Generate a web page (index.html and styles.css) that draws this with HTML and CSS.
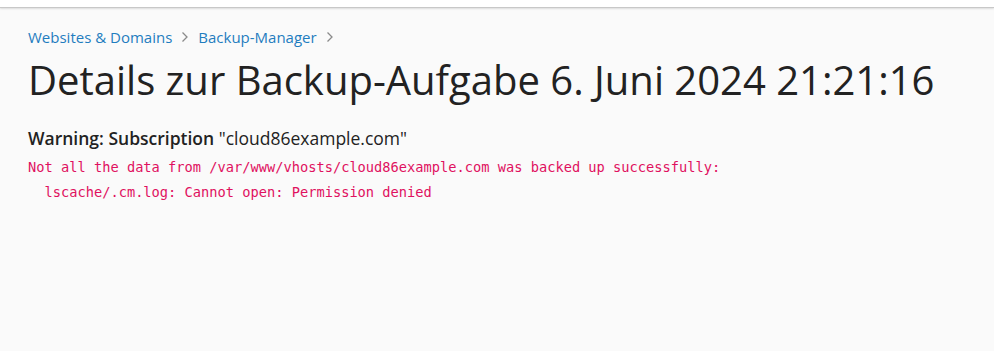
FILE: index.html
```html
<!DOCTYPE html>
<html>
<head>
<meta charset="utf-8">
<link rel="stylesheet" href="styles.css">
</head>
<body>
<header class="topbar"></header>
<main class="page">
  <nav class="breadcrumbs">
    <a href="#">Websites &amp; Domains</a>
    <span class="sep"><svg width="8" height="12" viewBox="0 0 8 12"><path d="M1.5 1.5 L6 6 L1.5 10.5" fill="none" stroke="#8a8a8a" stroke-width="1.3"/></svg></span>
    <a href="#">Backup-Manager</a>
    <span class="sep"><svg width="8" height="12" viewBox="0 0 8 12"><path d="M1.5 1.5 L6 6 L1.5 10.5" fill="none" stroke="#8a8a8a" stroke-width="1.3"/></svg></span>
  </nav>
  <h1 class="title">Details zur Backup-Aufgabe 6. Juni 2024 21:21:16</h1>
  <div class="warning"><b>Warning: Subscription</b> "cloud86example.com"</div>
  <pre class="log">Not all the data from /var/www/vhosts/cloud86example.com was backed up successfully:
  lscache/.cm.log: Cannot open: Permission denied</pre>
</main>
</body>
</html>
```
FILE: styles.css
```css
html, body {
  margin: 0;
  padding: 0;
  background: #fafafa;
  font-family: "Open Sans", sans-serif;
  color: #222;
}
.topbar {
  height: 7px;
  background: #fff;
  border-bottom: 1px solid #c8c8c8;
  box-shadow: 0 1px 2px rgba(0,0,0,0.12);
}
.page {
  padding: 19px 28px 0 28px;
}
.breadcrumbs {
  display: flex;
  align-items: center;
  font-size: 15px;
  line-height: 20px;
  gap: 9px;
}
.breadcrumbs a {
  color: #1f7dbf;
  text-decoration: none;
}
.sep {
  display: flex;
  align-items: center;
}
.title {
  margin: 6px 0 0 0;
  font-size: 40px;
  font-weight: 400;
  line-height: 54px;
  color: #222;
  letter-spacing: 0;
}
.warning {
  margin-top: 19px;
  font-size: 17.5px;
  line-height: 24px;
  color: #222;
}
.warning b {
  font-weight: 600;
}
.log {
  margin: 5px 0 0 0;
  font-family: "DejaVu Sans Mono", monospace;
  font-size: 13.7px;
  line-height: 25px;
  color: #e0115f;
}
```
